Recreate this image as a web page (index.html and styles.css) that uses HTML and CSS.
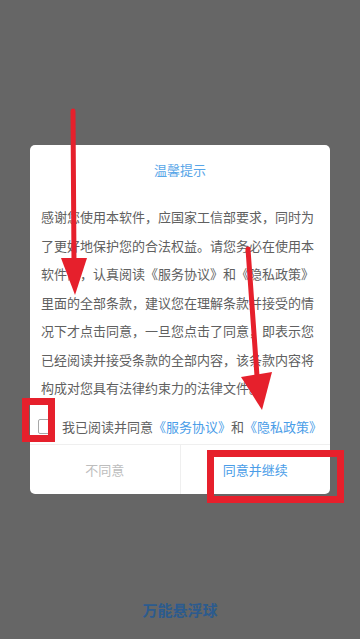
FILE: index.html
```html
<!DOCTYPE html>
<html lang="zh-CN">
<head>
<meta charset="utf-8">
<title>温馨提示</title>
<link rel="stylesheet" href="styles.css">
</head>
<body>
<div class="page">
  <div class="dialog">
    <div class="title">温馨提示</div>
    <div class="content">
      <span class="line">感谢您使用本软件，应国家工信部要求，同时为</span>
      <span class="line">了更好地保护您的合法权益。请您务必在使用本</span>
      <span class="line">软件前，认真阅读《服务协议》和《隐私政策》</span>
      <span class="line">里面的全部条款，建议您在理解条款并接受的情</span>
      <span class="line">况下才点击同意，一旦您点击了同意，即表示您</span>
      <span class="line">已经阅读并接受条款的全部内容，该条款内容将</span>
      <span class="line">构成对您具有法律约束力的法律文件。</span>
    </div>
    <div class="agree-row">
      <span class="checkbox"></span>
      <span class="agree-text">我已阅读并同意<span class="link">《服务协议》</span>和<span class="link">《隐私政策》</span></span>
    </div>
    <div class="buttons">
      <div class="btn btn-no">不同意</div>
      <div class="btn btn-yes">同意并继续</div>
    </div>
  </div>
  <div class="footer">万能悬浮球</div>
  <svg class="marks" width="360" height="639" viewBox="0 0 360 639">
    <line x1="73" y1="111" x2="74" y2="262" stroke="#e6202c" stroke-width="5" stroke-linecap="round"/>
    <polygon points="61,258 87,258 75,295" fill="#e6202c"/>
    <line x1="248" y1="249" x2="257" y2="376" stroke="#e6202c" stroke-width="5" stroke-linecap="round"/>
    <polygon points="241,377 272,372 262,410" fill="#e6202c"/>
    <rect x="25.5" y="401.5" width="26" height="37" fill="none" stroke="#e6202c" stroke-width="7"/>
    <rect x="210.5" y="453.5" width="130" height="46" fill="none" stroke="#e6202c" stroke-width="7"/>
  </svg>
</div>
</body>
</html>
```

FILE: styles.css
```css
* {
  box-sizing: border-box;
}

html, body {
  margin: 0;
  padding: 0;
}

body {
  background: #666666;
  font-family: "Noto Sans CJK SC", "Noto Sans", sans-serif;
}

.page {
  position: relative;
  width: 360px;
  height: 639px;
  display: flex;
  flex-direction: column;
  align-items: flex-start;
  padding-top: 145px;
  overflow: hidden;
}

.dialog {
  margin-left: 30px;
  width: 300px;
  background: #ffffff;
  border-radius: 5px;
  display: flex;
  flex-direction: column;
}

.title {
  padding-top: 15px;
  font-size: 13px;
  line-height: 20px;
  text-align: center;
  color: #58a6e8;
}

.content {
  padding: 23px 16px 0 11px;
  font-size: 13px;
  line-height: 28.5px;
  color: #606060;
}

.line {
  display: block;
  white-space: nowrap;
}

.agree-row {
  display: flex;
  align-items: center;
  padding: 10px 0 3px 8px;
  height: 41px;
  font-size: 13px;
  color: #606060;
}

.checkbox {
  width: 14px;
  height: 15px;
  border: 1.5px solid #a8a8a8;
  border-radius: 2px;
  margin-right: 10px;
  flex: none;
}

.agree-text {
  white-space: nowrap;
  line-height: 28px;
}

.link {
  color: #4a9de8;
}

.buttons {
  display: flex;
  border-top: 1px solid #efefef;
  height: 50px;
}

.btn {
  flex: 1;
  display: flex;
  align-items: center;
  justify-content: center;
  font-size: 13px;
}

.btn-no {
  color: #bdbdbd;
}

.btn-yes {
  color: #4a9de8;
  border-left: 1px solid #efefef;
}

.footer {
  margin-top: auto;
  align-self: center;
  padding-bottom: 19px;
  font-size: 15px;
  line-height: 20px;
  font-weight: 700;
  color: #2c5b8e;
}

.marks {
  position: absolute;
  left: 0;
  top: 0;
  pointer-events: none;
}
```
